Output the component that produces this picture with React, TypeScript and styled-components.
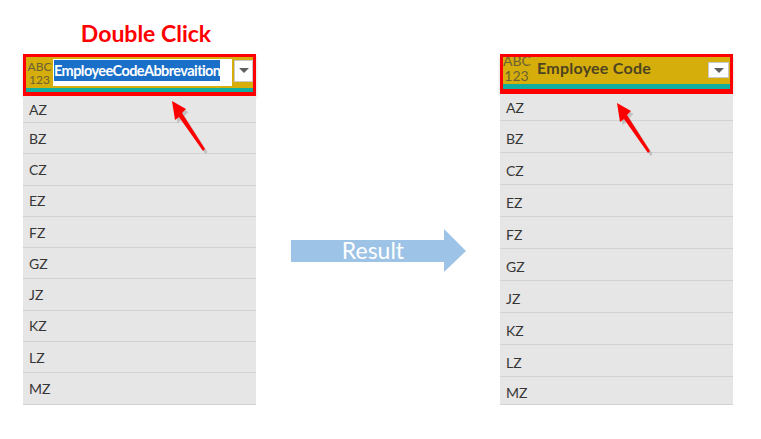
import React from 'react';
import styled, { createGlobalStyle } from 'styled-components';

const GlobalStyle = createGlobalStyle`
  html, body {
    margin: 0;
    background: #fff;
    font-family: Lato, "Open Sans", sans-serif;
  }
`;

const Page = styled.div`
  display: flex;
  align-items: flex-start;
  width: 761px;
  height: 439px;
  padding: 20px 0 0 23px;
  box-sizing: border-box;
  overflow: hidden;
`;

const LeftColumn = styled.div`
  display: flex;
  flex-direction: column;
  width: 233px;
`;

const RightColumn = styled(LeftColumn)`
  margin: 34px 0 0 34px;
`;

const Title = styled.div`
  height: 34px;
  padding-left: 13px;
  font-size: 23px;
  font-weight: 700;
  line-height: 27px;
  color: #f00;
  text-align: center;
`;

const Table = styled.div`
  position: relative;
`;

const Header = styled.div<{ $height: number; $bottom: number }>`
  display: flex;
  flex-direction: column;
  height: ${({ $height }) => $height}px;
  box-sizing: border-box;
  border: 3px solid #f00;
  border-bottom-width: ${({ $bottom }) => $bottom}px;
  background: #d6ae0c;
  box-shadow: 0 2px 3px rgba(0, 0, 0, 0.18);
`;

const HeaderBody = styled.div`
  flex: 1;
  display: flex;
  align-items: center;
  min-height: 0;
  overflow: hidden;
`;

const TealLine = styled.div<{ $height: number }>`
  height: ${({ $height }) => $height}px;
  flex-shrink: 0;
  background: #10ae9f;
`;

const TypeBadge = styled.div<{ $size: number; $offset: number }>`
  width: 27px;
  flex-shrink: 0;
  margin-top: ${({ $offset }) => $offset}px;
  font-size: ${({ $size }) => $size}px;
  line-height: ${({ $size }) => $size + 1}px;
  color: #6b6135;
  text-align: center;
`;

const NameInput = styled.div`
  width: 179px;
  height: 27px;
  flex-shrink: 0;
  display: flex;
  align-items: flex-start;
  background: #fff;
`;

const Selected = styled.span`
  height: 21px;
  margin: 1px 0 0 1px;
  font-size: 14.5px;
  font-weight: 700;
  line-height: 21px;
  letter-spacing: -0.57px;
  white-space: nowrap;
  color: #fff;
  background: #1a6fc9;
`;

const ColumnName = styled.div`
  flex: 1;
  padding-left: 7px;
  margin-top: -6px;
  font-size: 16px;
  font-weight: 700;
  letter-spacing: 0.25px;
  white-space: nowrap;
  color: #4d4320;
`;

const Dropdown = styled.div<{ $width: number; $height: number; $gap: number; $end: number; $lift: number }>`
  width: ${({ $width }) => $width}px;
  height: ${({ $height }) => $height}px;
  flex-shrink: 0;
  display: flex;
  align-items: center;
  justify-content: center;
  margin: 0 ${({ $end }) => $end}px ${({ $lift }) => $lift}px ${({ $gap }) => $gap}px;
  box-sizing: border-box;
  border: 1px solid #c9c9c9;
  background: #fff;

  &::after {
    content: '';
    border-left: 5px solid transparent;
    border-right: 5px solid transparent;
    border-top: 5px solid #5f5f5f;
  }
`;

const Row = styled.div<{ $height: number; $shift: number }>`
  display: flex;
  align-items: center;
  height: ${({ $height }) => $height}px;
  padding: ${({ $shift }) => $shift}px 0 0 6px;
  box-sizing: border-box;
  border-bottom: 1px solid #d2d2d2;
  background: #e6e6e6;
  font-size: 14px;
  color: #363636;
`;

const Pointer = styled.svg`
  position: absolute;
  overflow: visible;
`;

const LeftPointer = styled(Pointer)`
  left: 148px;
  top: 47px;
`;

const RightPointer = styled(Pointer)`
  left: 116px;
  top: 49px;
`;

const ResultArrow = styled.div`
  width: 175px;
  height: 43px;
  flex-shrink: 0;
  margin: 209px 0 0 35px;
  display: flex;
  align-items: center;
  justify-content: center;
  padding-right: 11px;
  box-sizing: border-box;
  background: #9dc3e6;
  clip-path: polygon(0 11px, 153px 11px, 153px 0, 175px 22px, 153px 43px, 153px 33px, 0 33px);
  font-size: 23px;
  line-height: 43px;
  color: #fff;
`;

const rowNames = ['AZ', 'BZ', 'CZ', 'EZ', 'FZ', 'GZ', 'JZ', 'KZ', 'LZ', 'MZ'];

const RedPointer = ({ as: Root }: { as: typeof LeftPointer }) => (
  <Root width="36" height="52" viewBox="0 0 36 52">
    <path d="M2 1 L16 9 L12 13 L35 49 L33 51 L9 17 L5 20 Z" fill="#8a8a8a" opacity="0.4" transform="translate(1.5 2)" />
    <path d="M1 0 L15 8 L11 12 L34 48 L32 50 L8 16 L4 19 Z" fill="#f00" />
  </Root>
);

export default function App() {
  return (
    <Page>
      <GlobalStyle />
      <LeftColumn>
        <Title>Double Click</Title>
        <Table>
          <Header $height={42} $bottom={4}>
            <HeaderBody>
              <TypeBadge $size={12} $offset={0}>ABC<br />123</TypeBadge>
              <NameInput>
                <Selected>EmployeeCodeAbbrevaition</Selected>
              </NameInput>
              <Dropdown $width={19} $height={22} $gap={2} $end={0} $lift={4} />
            </HeaderBody>
            <TealLine $height={4} />
          </Header>
          {rowNames.map((name, i) => (
            <Row key={name} $height={i === 0 ? 27 : 31.3} $shift={0}>{name}</Row>
          ))}
          <RedPointer as={LeftPointer} />
        </Table>
      </LeftColumn>
      <ResultArrow>Result</ResultArrow>
      <RightColumn>
        <Table>
          <Header $height={40} $bottom={5}>
            <HeaderBody>
              <TypeBadge $size={14} $offset={-5}>ABC<br />123</TypeBadge>
              <ColumnName>Employee Code</ColumnName>
              <Dropdown $width={21} $height={16} $gap={0} $end={1} $lift={1} />
            </HeaderBody>
            <TealLine $height={5} />
          </Header>
          {rowNames.map((name, i) => (
            <Row key={name} $height={i === 0 ? 27 : i === 9 ? 28 : 32} $shift={i === 0 ? 0 : 3}>{name}</Row>
          ))}
          <RedPointer as={RightPointer} />
        </Table>
      </RightColumn>
    </Page>
  );
}
